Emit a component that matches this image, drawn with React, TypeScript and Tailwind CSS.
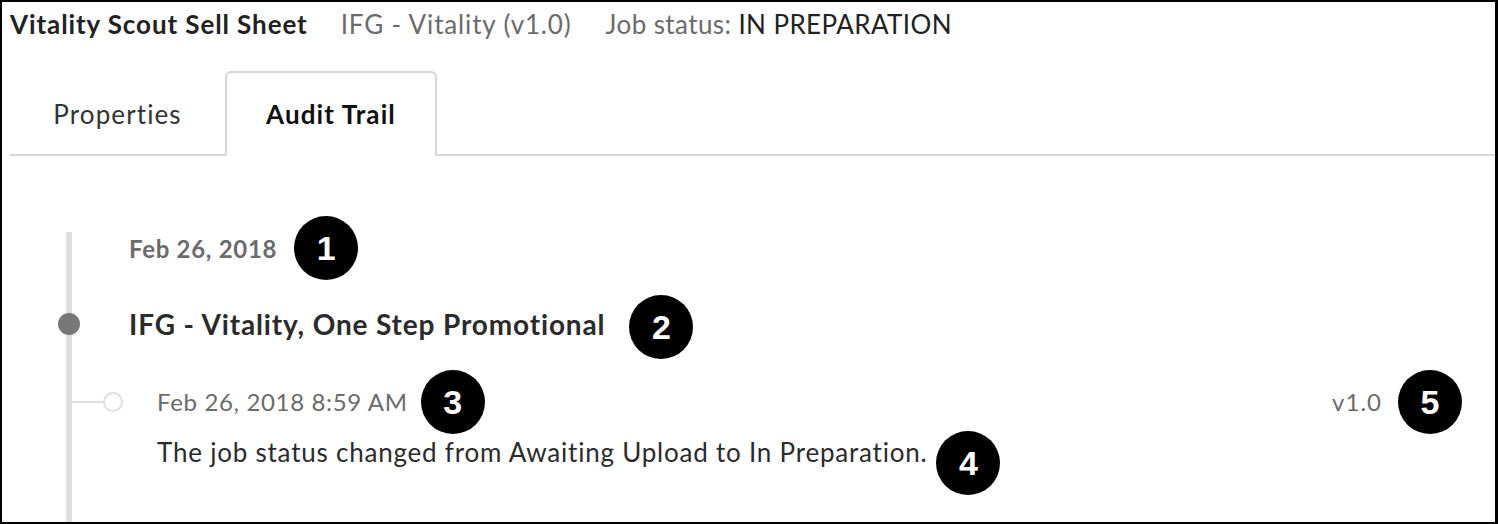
import React from "react";

function Badge({ n, className }: { n: number; className?: string }) {
  return (
    <span
      className={
        "inline-flex h-16 w-16 shrink-0 items-center justify-center rounded-full bg-black text-[34px] font-bold text-white " +
        (className ?? "")
      }
      style={{ fontFamily: '"Liberation Sans", Arial, sans-serif' }}
    >
      {n}
    </span>
  );
}

export default function App() {
  return (
    <div
      className="box-border h-[524px] w-[1498px] overflow-hidden border-2 border-r-[3px] border-black bg-white"
      style={{ fontFamily: "Lato, 'Open Sans', sans-serif" }}
    >
      {/* header */}
      <div className="flex h-[44px] items-center pl-[8px] text-[26px]">
        <span className="font-bold tracking-[0.9px] text-[#222]">Vitality Scout Sell Sheet</span>
        <span className="ml-[33px] tracking-[0.85px] text-[#6b6b6b]">IFG - Vitality (v1.0)</span>
        <span className="ml-[34px] tracking-[0.4px] text-[#6b6b6b]">
          Job status: <span className="text-[#222]">IN PREPARATION</span>
        </span>
      </div>

      {/* tabs */}
      <div className="ml-[8px] mt-[25px] flex h-[85px] border-b-2 border-[#d9d9d9]">
        <div className="flex w-[215px] items-center justify-center pt-[3px] text-[26px] tracking-[1.1px] text-[#333]">
          Properties
        </div>
        <div className="-mb-[2px] flex w-[212px] items-center justify-center rounded-t-md border-2 border-b-0 border-[#d6d6d6] bg-white text-[26px] font-bold tracking-[1.1px] text-[#111]">
          Audit Trail
        </div>
      </div>

      {/* timeline */}
      <div className="ml-[64px] mt-[76px] h-[300px] border-l-[6px] border-[#dedede] pl-[57px]">
        <div className="flex h-[34px] items-center">
          <span className="text-[24px] font-bold tracking-[0.7px] text-[#6b6b6b]">Feb 26, 2018</span>
          <Badge n={1} className="ml-[17px] -translate-y-[1px]" />
        </div>

        <div className="relative mt-[41px] flex h-[34px] items-center">
          <span className="absolute left-[-71px] top-1/2 h-[22px] w-[22px] -translate-y-1/2 rounded-full bg-[#777]" />
          <span className="text-[28px] font-bold tracking-[0.85px] text-[#2b2b2b]">
            IFG - Vitality, One Step Promotional
          </span>
          <Badge n={2} className="ml-[24px] translate-y-[3px]" />
        </div>

        <div className="ml-[28px] mt-[44px]">
          <div className="relative flex h-[34px] items-center pr-[33px]">
            <span className="absolute left-[-85px] top-1/2 h-[2px] w-[32px] -translate-y-1/2 bg-[#dedede]" />
            <span className="absolute left-[-54px] top-1/2 h-[20px] w-[20px] -translate-y-1/2 rounded-full border-2 border-[#dedede] bg-white" />
            <span className="text-[24px] tracking-[0.65px] text-[#6b6b6b]">Feb 26, 2018 8:59 AM</span>
            <Badge n={3} className="ml-[13px]" />
            <span className="ml-auto text-[24px] tracking-[1px] text-[#6b6b6b]">v1.0</span>
            <Badge n={5} className="ml-[16px]" />
          </div>
          <div className="mt-[16px] flex h-[34px] items-center">
            <span className="text-[26px] tracking-[0.78px] text-[#2b2b2b]">
              The job status changed from Awaiting Upload to In Preparation.
            </span>
            <Badge n={4} className="ml-[9px] translate-y-[11px]" />
          </div>
        </div>
      </div>
    </div>
  );
}
